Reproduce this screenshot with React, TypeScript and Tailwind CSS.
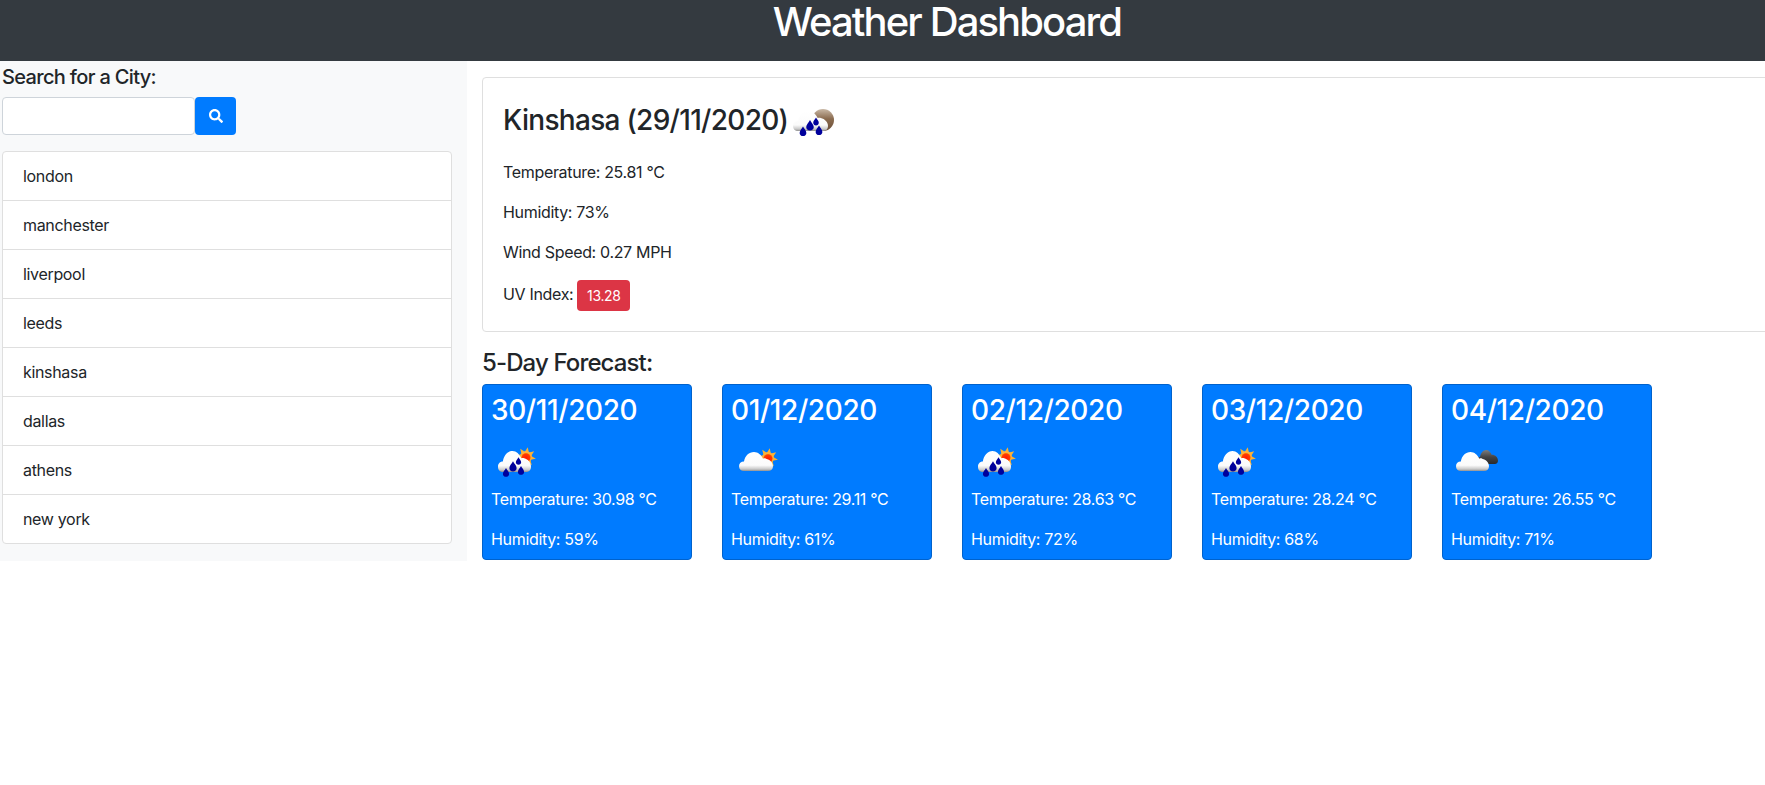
import React from "react";
import { FaSearch } from "react-icons/fa";

const cities = ["london", "manchester", "liverpool", "leeds", "kinshasa", "dallas", "athens", "new york"];

function Defs() {
  return (
    <svg width="0" height="0" className="absolute">
      <defs>
        <linearGradient id="cloudW" x1="0" y1="0" x2="0" y2="1">
          <stop offset="0" stopColor="#ffffff" />
          <stop offset="0.7" stopColor="#fbfbfb" />
          <stop offset="0.9" stopColor="#c9c9c9" />
          <stop offset="1" stopColor="#8f8f8f" />
        </linearGradient>
        <linearGradient id="cloudD" x1="0" y1="0" x2="0" y2="1">
          <stop offset="0" stopColor="#7d7d7d" />
          <stop offset="0.5" stopColor="#444444" />
          <stop offset="1" stopColor="#2a2a2a" />
        </linearGradient>
        <linearGradient id="moon" x1="0" y1="0" x2="0" y2="1">
          <stop offset="0" stopColor="#c9b8a6" />
          <stop offset="0.45" stopColor="#8a6b4f" />
          <stop offset="1" stopColor="#6d4f38" />
        </linearGradient>
        <radialGradient id="sun" cx="0.5" cy="0.55" r="0.6">
          <stop offset="0" stopColor="#ff1a00" />
          <stop offset="0.7" stopColor="#ff3a00" />
          <stop offset="1" stopColor="#ff9a00" />
        </radialGradient>
      </defs>
    </svg>
  );
}

function Sun({ cx, cy }: { cx: number; cy: number }) {
  const rays = [0, 45, 90, 135, 180, 225, 270, 315];
  return (
    <g>
      {rays.map((a) => (
        <polygon
          key={a}
          points={`${cx - 2},${cy - 5} ${cx + 2},${cy - 5} ${cx},${cy - 10}`}
          fill="#f9b233"
          transform={`rotate(${a + 10} ${cx} ${cy})`}
        />
      ))}
      <circle cx={cx} cy={cy} r="6" fill="#fbb040" />
      <circle cx={cx} cy={cy + 0.5} r="4.6" fill="url(#sun)" />
    </g>
  );
}

function Cloud({ x, y, w, h, fill = "url(#cloudW)" }: { x: number; y: number; w: number; h: number; fill?: string }) {
  return (
    <svg x={x} y={y} width={w} height={h} viewBox="0 0 34 20" preserveAspectRatio="none">
      <path
        d="M5 20C2 20 0 18 0 15C0 12 2 10 5 10C6 4 10 0 15 0C19 0 22 3 24 7C25 6.600 26 6.500 27 7C31 8 34 11 34 15C34 18 32 20 29 20Z"
        fill={fill}
      />
    </svg>
  );
}

function Drop({ x, y, s = 1 }: { x: number; y: number; s?: number }) {
  return (
    <path
      transform={`translate(${x} ${y}) scale(${s})`}
      d="M0 -4.500C0.800 -2.800 2.800 -1.200 2.800 0.800C2.800 2.400 1.600 3.400 0 3.400C-1.600 3.400 -2.800 2.400 -2.800 0.800C-2.800 -1.200 -0.800 -2.800 0 -4.500Z"
      fill="#00009c"
    />
  );
}

function RainDay() {
  return (
    <svg width="50" height="50" viewBox="0 0 50 50" className="block">
      <Sun cx={35} cy={20} />
      <Cloud x={7} y={14} w={33} h={21} />
      <Drop x={15} y={36} s={1.1} />
      <Drop x={22} y={30} s={1.3} />
      <Drop x={27.500} y={24.500} s={0.95} />
      <Drop x={30} y={34} s={1.1} />
    </svg>
  );
}

function FewDay() {
  return (
    <svg width="50" height="50" viewBox="0 0 50 50" className="block">
      <Sun cx={37} cy={21} />
      <Cloud x={8} y={15} w={34} h={19} />
    </svg>
  );
}

function BrokenDay() {
  return (
    <svg width="50" height="50" viewBox="0 0 50 50" className="block">
      <Cloud x={26} y={13} w={21} h={14} fill="url(#cloudD)" />
      <Cloud x={5} y={15} w={33} h={19} />
    </svg>
  );
}

function RainNight() {
  return (
    <svg width="50" height="50" viewBox="0 0 50 50" className="block shrink-0">
      <circle cx="34" cy="22" r="11" fill="url(#moon)" />
      <Cloud x={4} y={13} w={35} h={20} />
      <Drop x={14} y={34} s={1.2} />
      <Drop x={21} y={28} s={1.35} />
      <Drop x={27} y={24} s={1} />
      <Drop x={30} y={33} s={1.2} />
    </svg>
  );
}

const forecast = [
  { date: "30/11/2020", temp: "30.98", hum: "59", Icon: RainDay },
  { date: "01/12/2020", temp: "29.11", hum: "61", Icon: FewDay },
  { date: "02/12/2020", temp: "28.63", hum: "72", Icon: RainDay },
  { date: "03/12/2020", temp: "28.24", hum: "68", Icon: RainDay },
  { date: "04/12/2020", temp: "26.55", hum: "71", Icon: BrokenDay },
];

export default function App() {
  return (
    <div className="w-full h-screen overflow-hidden bg-white font-[Inter,sans-serif] text-[#212529] text-base tracking-[-0.33px]">
      <Defs />
      <div className="w-[1894px]">
        <header className="h-[61px] bg-[#343a40] text-white flex justify-center">
          <h1 className="w-fit h-[44px] text-[40px] leading-[44px] font-[550] tracking-[-1.9px]">Weather Dashboard</h1>
        </header>
        <div className="flex items-start">
          <aside className="w-[467px] h-[500px] shrink-0 bg-[#f8f9fa] pl-[2px] pr-[15px]">
            <label className="block h-[36px] text-[20px] leading-[32px] font-medium tracking-[-0.66px]">
              Search for a City:
            </label>
            <div className="flex h-[38px] mb-4">
              <input className="w-[193px] h-full bg-white border border-[#ced4da] rounded-[4px] outline-none" />
              <button className="w-[41px] h-full bg-[#007bff] rounded-[4px] text-white flex items-center justify-center">
                <FaSearch size={14} />
              </button>
            </div>
            <ul className="border border-[#dfdfdf] rounded-[4px] bg-white">
              {cities.map((c, i) => (
                <li
                  key={c}
                  className={`pl-5 pb-[1px] flex items-center leading-6 ${i > 0 ? "h-[49px] border-t border-[#dfdfdf]" : "h-[48px]"}`}
                >
                  {c}
                </li>
              ))}
            </ul>
          </aside>
          <main className="flex-1 pl-[15px] pr-4 pt-4">
            <section className="h-[255px] border border-[#dfdfdf] rounded-[4px] p-5">
              <h2 className="flex h-[54px] mb-2 text-[28px] leading-[44px] font-medium tracking-[-0.7px]">
                <span>Kinshasa (29/11/2020)</span>
                <span className="ml-[1px]">
                  <RainNight />
                </span>
              </h2>
              <p className="mb-4 leading-6">Temperature: 25.81 °C</p>
              <p className="mb-4 leading-6">Humidity: 73%</p>
              <p className="mb-4 leading-6">Wind Speed: 0.27 MPH</p>
              <div className="flex items-center h-[31px] leading-6">
                <span className="pb-[3px]">UV Index:</span>
                <span className="ml-1 w-[53px] h-[31px] bg-[#dc3545] text-white text-sm rounded-[4px] flex items-center justify-center">
                  13.28
                </span>
              </div>
            </section>
            <h3 className="mt-4 mb-[7px] text-[24px] leading-[29px] font-medium tracking-[-0.88px]">5-Day Forecast:</h3>
            <div className="flex gap-[30px]">
              {forecast.map((f) => (
                <article
                  key={f.date}
                  className="w-[210px] h-[176px] bg-[#007bff] border border-[#0062cc] rounded-[4px] p-2 text-white"
                >
                  <h4 className="h-[44px] text-[28px] leading-[34px] font-[550] tracking-[-0.4px]">{f.date}</h4>
                  <f.Icon />
                  <p className="mb-4 leading-6">Temperature: {f.temp} °C</p>
                  <p className="leading-6">Humidity: {f.hum}%</p>
                </article>
              ))}
            </div>
          </main>
        </div>
      </div>
    </div>
  );
}
